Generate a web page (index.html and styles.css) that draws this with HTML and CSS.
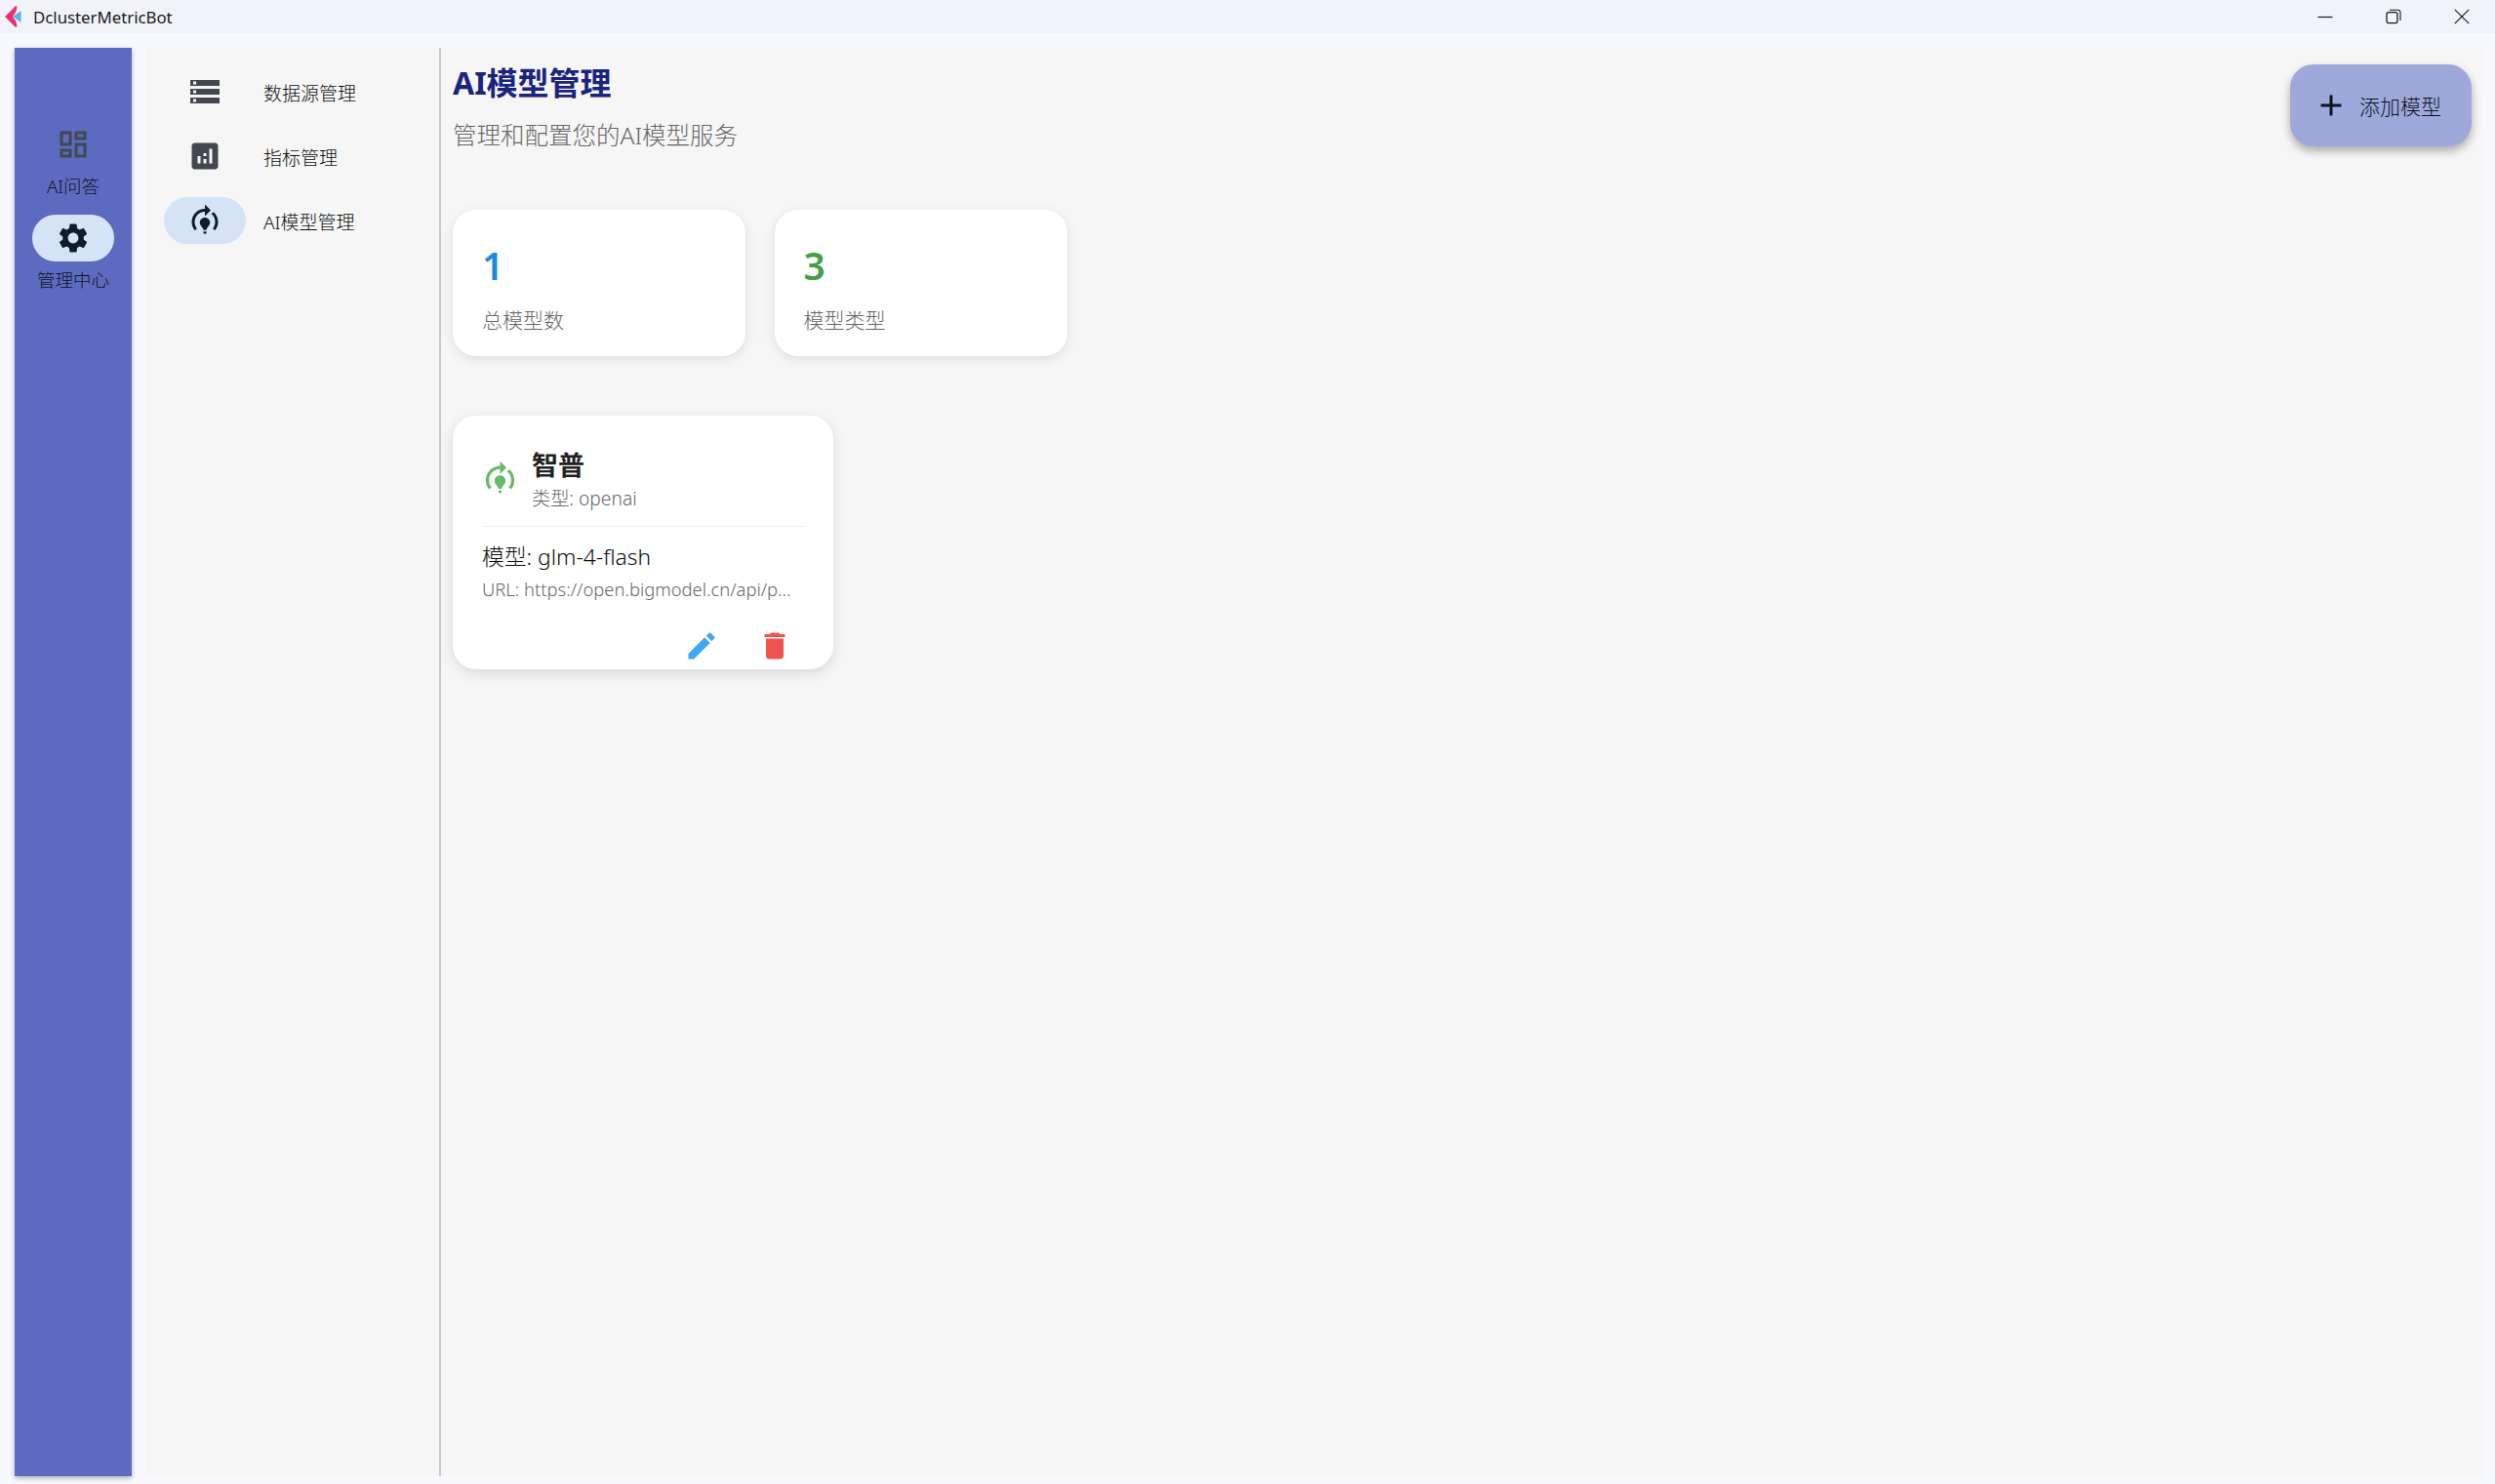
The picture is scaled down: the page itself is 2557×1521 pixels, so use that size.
FILE: index.html
```html
<!DOCTYPE html>
<html lang="zh-CN">
<head>
<meta charset="utf-8">
<title>DclusterMetricBot</title>
<link rel="stylesheet" href="styles.css">
</head>
<body>
<div class="app">
  <header class="titlebar">
    <div class="brand">
      <svg class="logo" viewBox="0 0 18 22"><path fill="#ef2f6e" d="M0 11 L11 0 L12.5 1 L11.5 6 L8 11 L11.5 16 L12.5 21 L11 22 Z"/><path fill="#4fb8ea" d="M8 11 L16.5 5 L16.5 17 Z"/></svg>
      <span class="app-name">DclusterMetricBot</span>
    </div>
    <div class="win-controls">
      <svg class="win-btn" viewBox="0 0 16 16"><path d="M0.5 8.5h15" fill="none" stroke="#1a1a1a" stroke-width="1.2"/></svg>
      <svg class="win-btn" viewBox="0 0 16 16"><rect x="1" y="3.6" width="11" height="11" rx="2" fill="none" stroke="#1a1a1a" stroke-width="1.3"/><path d="M4 1.3h8.5a2.5 2.5 0 0 1 2.5 2.5v8.2" fill="none" stroke="#1a1a1a" stroke-width="1.1"/></svg>
      <svg class="win-btn" viewBox="0 0 16 16"><path d="M0.8 0.8l14.4 14.4M15.2 0.8L0.8 15.2" fill="none" stroke="#1a1a1a" stroke-width="1.2"/></svg>
    </div>
  </header>

  <div class="body">
    <nav class="rail">
      <div class="rail-item">
        <div class="rail-pill">
          <svg class="icon muted" viewBox="0 0 24 24"><path d="M19 5v2h-4V5h4M9 5v6H5V5h4m10 8v6h-4v-6h4M9 17v2H5v-2h4M21 3h-8v6h8V3zM11 3H3v10h8V3zm10 8h-8v10h8V11zm-10 4H3v6h8v-6z"/></svg>
        </div>
        <span class="rail-label">AI问答</span>
      </div>
      <div class="rail-item">
        <div class="rail-pill active">
          <svg class="icon" viewBox="0 0 24 24"><path d="M19.14 12.94c.04-.3.06-.61.06-.94 0-.32-.02-.64-.07-.94l2.03-1.58c.18-.14.23-.41.12-.61l-1.92-3.32c-.12-.22-.37-.29-.59-.22l-2.39.96c-.5-.38-1.03-.7-1.62-.94l-.36-2.54c-.04-.24-.24-.41-.48-.41h-3.84c-.24 0-.43.17-.47.41l-.36 2.54c-.59.24-1.13.57-1.62.94l-2.39-.96c-.22-.08-.47 0-.59.22L2.74 8.87c-.12.21-.08.47.12.61l2.03 1.58c-.05.3-.09.63-.09.94s.02.64.07.94l-2.03 1.58c-.18.14-.23.41-.12.61l1.92 3.32c.12.22.37.29.59.22l2.39-.96c.5.38 1.03.7 1.62.94l.36 2.54c.05.24.24.41.48.41h3.84c.24 0 .44-.17.47-.41l.36-2.54c.59-.24 1.13-.56 1.62-.94l2.39.96c.22.08.47 0 .59-.22l1.92-3.32c.12-.22.07-.47-.12-.61l-2.01-1.58zM12 15.6c-1.98 0-3.6-1.62-3.6-3.6s1.62-3.6 3.6-3.6 3.6 1.62 3.6 3.6-1.62 3.6-3.6 3.6z"/></svg>
        </div>
        <span class="rail-label">管理中心</span>
      </div>
    </nav>

    <div class="panel">
      <aside class="subnav">
        <div class="sub-item">
          <div class="sub-pill"><svg class="icon muted" viewBox="0 0 24 24"><path d="M2 20h20v-4H2v4zm2-3h2v2H4v-2zM2 4v4h20V4H2zm4 3H4V5h2v2zm-4 7h20v-4H2v4zm2-3h2v2H4v-2z"/></svg></div>
          <span class="sub-label">数据源管理</span>
        </div>
        <div class="sub-item">
          <div class="sub-pill"><svg class="icon muted" viewBox="0 0 24 24"><path d="M19 3H5c-1.1 0-2 .9-2 2v14c0 1.1.9 2 2 2h14c1.1 0 2-.9 2-2V5c0-1.1-.9-2-2-2zM9 17H7v-5h2v5zm4 0h-2v-3h2v3zm0-5h-2v-2h2v2zm4 5h-2V7h2v10z"/></svg></div>
          <span class="sub-label">指标管理</span>
        </div>
        <div class="sub-item">
          <div class="sub-pill active"><svg class="icon" viewBox="0 0 24 24"><path d="M15.5,13.5c0,2-2.5,3.5-2.5,5h-2c0-1.5-2.5-3-2.5-5c0-1.93,1.57-3.5,3.5-3.5h0C13.93,10,15.5,11.57,15.5,13.5z M13,19.5h-2V21h2V19.5z M19,13c0,1.68-0.59,3.21-1.58,4.42l1.42,1.42C20.18,17.27,21,15.23,21,13c0-2.74-1.23-5.19-3.16-6.84l-1.42,1.42C17.99,8.86,19,10.82,19,13z M16,5l-4-4v3c0,0,0,0,0,0c-4.97,0-9,4.03-9,9c0,2.23,0.82,4.27,2.16,5.84l1.42-1.42C5.59,16.21,5,14.68,5,13c0-3.86,3.14-7,7-7c0,0,0,0,0,0v3L16,5z"/></svg></div>
          <span class="sub-label">AI模型管理</span>
        </div>
      </aside>

      <main class="main">
        <h1 class="page-title">AI模型管理</h1>
        <p class="page-sub">管理和配置您的AI模型服务</p>

        <section class="stats">
          <div class="stat">
            <div class="stat-num blue">1</div>
            <div class="stat-label">总模型数</div>
          </div>
          <div class="stat">
            <div class="stat-num green">3</div>
            <div class="stat-label">模型类型</div>
          </div>
        </section>

        <article class="model-card">
          <div class="model-head">
            <svg class="icon model-icon" viewBox="0 0 24 24"><path d="M15.5,13.5c0,2-2.5,3.5-2.5,5h-2c0-1.5-2.5-3-2.5-5c0-1.93,1.57-3.5,3.5-3.5h0C13.93,10,15.5,11.57,15.5,13.5z M13,19.5h-2V21h2V19.5z M19,13c0,1.68-0.59,3.21-1.58,4.42l1.42,1.42C20.18,17.27,21,15.23,21,13c0-2.74-1.23-5.19-3.16-6.84l-1.42,1.42C17.99,8.86,19,10.82,19,13z M16,5l-4-4v3c0,0,0,0,0,0c-4.97,0-9,4.03-9,9c0,2.23,0.82,4.27,2.16,5.84l1.42-1.42C5.59,16.21,5,14.68,5,13c0-3.86,3.14-7,7-7c0,0,0,0,0,0v3L16,5z"/></svg>
            <div class="model-titles">
              <div class="model-name">智普</div>
              <div class="model-type">类型: openai</div>
            </div>
          </div>
          <div class="model-line">模型: glm-4-flash</div>
          <div class="model-url">URL: https://open.bigmodel.cn/api/p...</div>
          <div class="model-actions">
            <svg class="icon edit" viewBox="0 0 24 24"><path d="M3 17.25V21h3.75L17.81 9.94l-3.75-3.75L3 17.25zM20.71 7.04c.39-.39.39-1.02 0-1.41l-2.34-2.34c-.39-.39-1.02-.39-1.41 0l-1.83 1.83 3.75 3.75 1.83-1.83z"/></svg>
            <svg class="icon del" viewBox="0 0 24 24"><path d="M6 19c0 1.1.9 2 2 2h8c1.1 0 2-.9 2-2V7H6v12zM19 4h-3.5l-1-1h-5l-1 1H5v2h14V4z"/></svg>
          </div>
        </article>

        <button class="fab" type="button">
          <svg class="icon" viewBox="0 0 24 24"><path d="M19 13h-6v6h-2v-6H5v-2h6V5h2v6h6v2z"/></svg>
          <span>添加模型</span>
        </button>
      </main>
    </div>
  </div>
</div>
</body>
</html>
```
FILE: styles.css
```css
* { box-sizing: border-box; }
html, body { margin: 0; height: 100%; }
body {
  font-family: "Noto Sans", "Noto Sans CJK SC", sans-serif;
  font-weight: 300;
  color: #1a1c1e;
  background: #f8f9ff;
  overflow: hidden;
}
.app { display: flex; flex-direction: column; height: 1521px; }

.titlebar {
  height: 34px;
  flex: none;
  background: #f1f3f9;
  display: flex;
  align-items: center;
  justify-content: space-between;
}
.brand { display: flex; align-items: center; padding-left: 5px; }
.logo { width: 18px; height: 22px; }
.app-name { margin-left: 11px; font-size: 16.8px; font-weight: 400; color: #1a1a1a; }
.win-controls { display: flex; padding-right: 26px; gap: 54px; }
.win-btn { width: 16px; height: 16px; display: block; }

.body { flex: 1; display: flex; padding: 15px 12px 8px 15px; gap: 15px; min-height: 0; }

.icon { width: 36px; height: 36px; display: block; fill: currentColor; }
.muted { color: #44474f; }

.rail {
  width: 120px;
  flex: none;
  background: #5c6bc0;
  box-shadow: 0 2px 5px rgba(0, 0, 0, .3);
  padding-top: 75px;
  display: flex;
  flex-direction: column;
  align-items: center;
  gap: 14px;
}
.rail-item { display: flex; flex-direction: column; align-items: center; }
.rail-pill {
  width: 84px;
  height: 48px;
  border-radius: 24px;
  display: flex;
  align-items: center;
  justify-content: center;
  color: #0f1c2e;
}
.rail-pill.active { background: #d6e3f7; }
.rail-label { font-size: 18.5px; line-height: 30px; margin-top: 4px; color: #0e1424; }

.panel { flex: 1; display: flex; background: #f6f6f6; min-width: 0; }
.subnav {
  width: 302px;
  flex: none;
  border-right: 2px solid #c6c9d2;
  padding: 12px 0 0 18px;
}
.sub-item { height: 66px; display: flex; align-items: center; }
.sub-pill {
  width: 84px;
  height: 48px;
  border-radius: 24px;
  display: flex;
  align-items: center;
  justify-content: center;
  color: #0f1c2e;
}
.sub-pill.active { background: #d6e3f7; }
.sub-label { margin-left: 18px; font-size: 19px; padding-top: 2px; color: #0c0e10; }

.main { flex: 1; position: relative; padding: 14px 0 0 12px; min-width: 0; }
.page-title { margin: 0; font-size: 32px; line-height: 44px; font-weight: 700; color: #1a237e; }
.page-sub { margin: 14px 0 0; font-size: 24.5px; line-height: 36px; color: #666666; }

.stats { display: flex; gap: 29.5px; margin-top: 58px; }
.stat {
  width: 300px;
  height: 150px;
  background: #fff;
  border-radius: 24px;
  box-shadow: 0 3px 12px rgba(0, 0, 0, .1);
  padding: 34px 30px 0 30px;
}
.stat-num { font-size: 39px; line-height: 46px; font-weight: 600; }
.blue { color: #1e88e5; }
.green { color: #43a047; }
.stat-label { margin-top: 19px; font-size: 21px; line-height: 28px; color: #666666; }

.model-card {
  width: 390px;
  height: 260px;
  margin-top: 61px;
  background: #fff;
  border-radius: 24px;
  box-shadow: 0 4px 14px rgba(0, 0, 0, .12);
  padding: 33px 30px 6px 30px;
}
.model-head {
  display: flex;
  align-items: center;
  gap: 13px;
  padding-bottom: 14px;
  border-bottom: 1.5px solid #eeeeee;
}
.model-icon { color: #66bb6a; width: 39px; height: 39px; margin-left: -1px; margin-top: -3px; }
.model-name { font-size: 27px; line-height: 36px; font-weight: 700; color: #212121; }
.model-type { font-size: 19.2px; line-height: 28px; margin-top: 2px; color: #666666; }
.model-line { margin-top: 15px; font-size: 22.8px; line-height: 31px; color: #0e0e0e; }
.model-url {
  margin-top: 4px;
  font-size: 18.4px;
  line-height: 28px;
  color: #666666;
  white-space: nowrap;
}
.model-actions { display: flex; justify-content: flex-end; gap: 39px; margin-top: 26px; padding-right: 12px; }
.edit { color: #42a5f5; }
.del { color: #ef5350; }

.fab {
  position: absolute;
  top: 17px;
  right: 12px;
  width: 186px;
  height: 84px;
  border: 0;
  border-radius: 24px;
  background: #9fa8da;
  box-shadow: 0 5px 10px rgba(0, 0, 0, .3);
  display: flex;
  align-items: center;
  padding: 0 0 0 24px;
  gap: 11px;
  font-family: inherit;
  font-weight: 300;
  font-size: 21px;
  color: #0a1424;
}
```
